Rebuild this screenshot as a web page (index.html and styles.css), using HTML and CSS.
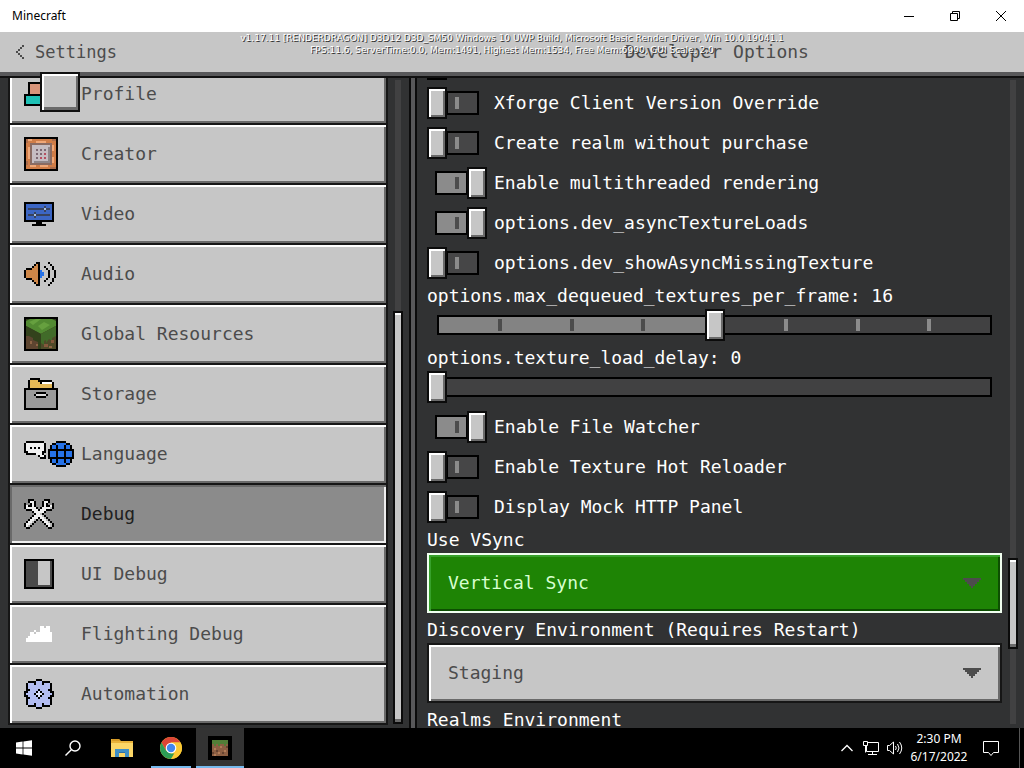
FILE: index.html
```html
<!DOCTYPE html>
<html lang="en">
<head>
<meta charset="utf-8">
<title>Minecraft</title>
<link rel="stylesheet" href="styles.css">
</head>
<body>
<div class="window-bar">
  <span class="window-title">Minecraft</span>
  <button class="window-button" aria-label="Minimize"><svg width="12" height="12"><path d="M1 6.5h10" stroke="#000" fill="none"/></svg></button>
  <button class="window-button" aria-label="Restore"><svg width="12" height="12"><path d="M1.5 3.5h7v7h-7zM3.5 3.5v-2h7v7h-2" stroke="#000" fill="none"/></svg></button>
  <button class="window-button" aria-label="Close"><svg width="12" height="12"><path d="M1 1l10 10M11 1L1 11" stroke="#000" fill="none"/></svg></button>
</div>

<div class="app">
  <header class="header">
    <button class="back"><svg width="10" height="14" viewBox="0 0 5 7" shape-rendering="crispEdges"><path d="M3 0h1v1H3zM2 1h1v1H2zM1 2h1v1H1zM0 3h1v1H0zM1 4h1v1H1zM2 5h1v1H2zM3 6h1v1H3z" fill="#4c4c4c"/></svg>Settings</button>
    <h1 class="page-title">Developer Options</h1>
  </header>
  <div class="debug-info">v1.17.11 [RENDERDRAGON] D3D12 D3D_SM50 Windows 10 UWP Build, Microsoft Basic Render Driver, Win 10.0.19041.1<br>FPS:11.6, ServerTime:0.0, Mem:1491, Highest Mem:1534, Free Mem:6990, GUI Scale: 2.0</div>
  <div class="blank-tile"></div>

  <main class="panels">
    <nav class="sidebar">
      <div class="menu">
        <button class="menu-item"><span class="icon"><svg width="34" height="24" viewBox="0 0 17 12" shape-rendering="crispEdges"><path d="M2 0h10v6H2z"/><path d="M3 1h8v5H3z" fill="#d8957a"/><path d="M0 6h14v6H0z"/><path d="M1 7h12v4H1z" fill="#1fc1b5"/></svg></span>Profile</button>
        <button class="menu-item"><span class="icon"><svg width="34" height="34" viewBox="0 0 17 17" shape-rendering="crispEdges"><path d="M0 0h17v17H0z"/><path d="M1 1h15v15H1z" fill="#cf7d48"/><path d="M2 1h2v1H2zM6 2h5v1H6zM2 5h1v6H2zM14 4h1v3h-1zM3 14h3v1H3zM8 14h4v1H8zM14 10h1v3h-1z" fill="#f0a878"/><path d="M1 1h1v2H1zM14 1h2v1h-2zM1 12h1v2H1zM13 15h3v1h-3z" fill="#a96c4c"/><path d="M3 3h11v11H3z" fill="#8a6b62"/><path d="M4 4h9v9H4z" fill="#c5bdc2"/><path d="M12 5h1v8H5v-1h7z" fill="#8f8689"/><path d="M6 6h1v1H6zM8 6h1v1H8zM10 6h1v1h-1zM6 8h1v1H6zM8 8h1v1H8zM6 10h1v1H6z" fill="#7d6974"/><path d="M10 8h1v1h-1zM8 10h1v1H8zM10 10h1v1h-1z" fill="#b64e61"/></svg></span>Creator</button>
        <button class="menu-item"><span class="icon" data-icon="video"></span>Video</button>
        <button class="menu-item"><span class="icon" data-icon="audio"></span>Audio</button>
        <button class="menu-item"><span class="icon"><svg width="34" height="34" viewBox="0 0 34 34"><path d="M0 0h34v34H0z"/><path d="M2 2h30v30H2z" fill="#2e3c1b"/><path d="M2 4L6 2h22l4 2v5L17 17 2 9z" fill="#528a32"/><path d="M5 5l7-3h5l-8 6zM14 9l6-4 6 3-8 5z" fill="#66a03f"/><path d="M2 9l15 8v15H2z" fill="#33421c"/><path d="M17 17l15-8v23H17z" fill="#4f4a29"/><path d="M17 17l15-8v10l-4 2v3l-3-2-3 4v-3l-2 1v4l-3-2z" fill="#416b29"/><path d="M5 19l4 2v2l5 2v7H2V19h3z" fill="#5d4530"/><path d="M20 27h4v3h-4zM27 23h3v3h-3z" fill="#85583c"/><path d="M6 24h2v3H6zM12 27h2v2h-2zM25 29h3v2h-3z" fill="#8e6545"/></svg></span>Global Resources</button>
        <button class="menu-item"><span class="icon"><svg width="34" height="32" viewBox="0 0 17 16" shape-rendering="crispEdges"><path d="M3 0h5v1h6v1h1v3H2V1h1z"/><path d="M3 1h4v1h1v1h6v2H3z" fill="#e5b957"/><path d="M9 2h5v1H9z" fill="#fff"/><path d="M0 5h17v11H0z"/><path d="M1 6h15v9H1z" fill="#9a9a9a"/><path d="M6 7h5v1H6zM5 8h1v1H5zM11 8h1v1h-1zM6 9h5v1H6z"/><path d="M6 8h5v1H6z" fill="#ddd"/></svg></span>Storage</button>
        <button class="menu-item"><span class="icon" data-icon="language"></span>Language</button>
        <button class="menu-item selected" aria-current="page"><span class="icon" data-icon="tools"></span>Debug</button>
        <button class="menu-item"><span class="icon"><svg width="30" height="30" viewBox="0 0 15 15" shape-rendering="crispEdges"><path d="M0 0h15v15H0z"/><path d="M1 1h13v13H1z" fill="#4a4a4a"/><path d="M7 1h6v12H7z" fill="#c6c6c6"/></svg></span>UI Debug</button>
        <button class="menu-item"><span class="icon" data-icon="cloud"></span>Flighting Debug</button>
        <button class="menu-item"><span class="icon" data-icon="gear"></span>Automation</button>
      </div>
      <div class="scroll sidebar-scroll"><div class="thumb"></div></div>
    </nav>

    <section class="content">
      <form class="options">
        <div class="clipped-toggle"></div>
        <label class="toggle-row"><input type="checkbox" class="toggle">Xforge Client Version Override</label>
        <label class="toggle-row"><input type="checkbox" class="toggle">Create realm without purchase</label>
        <label class="toggle-row"><input type="checkbox" class="toggle" checked>Enable multithreaded rendering</label>
        <label class="toggle-row"><input type="checkbox" class="toggle" checked>options.dev_asyncTextureLoads</label>
        <label class="toggle-row"><input type="checkbox" class="toggle">options.dev_showAsyncMissingTexture</label>
        <div class="field">
          <label class="field-label" for="max-textures">options.max_dequeued_textures_per_frame: 16</label>
          <div class="slider">
            <div class="track half"><i class="tick dark"></i><i class="tick dark"></i><i class="tick dark"></i><i class="tick"></i><i class="tick"></i><i class="tick"></i><i class="tick"></i></div>
            <input type="range" id="max-textures" min="0" max="32" value="16">
          </div>
        </div>
        <div class="field">
          <label class="field-label" for="load-delay">options.texture_load_delay: 0</label>
          <div class="slider">
            <div class="track"></div>
            <input type="range" id="load-delay" min="0" max="32" value="0">
          </div>
        </div>
        <label class="toggle-row"><input type="checkbox" class="toggle" checked>Enable File Watcher</label>
        <label class="toggle-row"><input type="checkbox" class="toggle">Enable Texture Hot Reloader</label>
        <label class="toggle-row"><input type="checkbox" class="toggle">Display Mock HTTP Panel</label>
        <div class="field">
          <label class="field-label" for="vsync">Use VSync</label>
          <div class="dropdown">
            <select id="vsync" class="active"><option>Vertical Sync</option></select>
            <svg class="arrow" width="18" height="10" viewBox="0 0 9 5" shape-rendering="crispEdges"><path d="M0 0h9v1H8v1H7v1H6v1H5v1H4V4H3V3H2V2H1V1H0z" fill="#4c4c4c"/></svg>
          </div>
        </div>
        <div class="field">
          <label class="field-label" for="discovery">Discovery Environment (Requires Restart)</label>
          <div class="dropdown">
            <select id="discovery"><option>Staging</option></select>
            <svg class="arrow" width="18" height="10" viewBox="0 0 9 5" shape-rendering="crispEdges"><path d="M0 0h9v1H8v1H7v1H6v1H5v1H4V4H3V3H2V2H1V1H0z" fill="#4c4c4c"/></svg>
          </div>
        </div>
        <div class="field-label">Realms Environment</div>
      </form>
      <div class="scroll content-scroll"><div class="thumb"></div></div>
    </section>
  </main>
</div>

<footer class="taskbar">
  <button class="task" aria-label="Start"><svg width="16" height="16"><path d="M0 2.4L6.6 1.5v6H0zM7.4 1.4L16 .2v7.3H7.4zM0 8.4h6.6v6L0 13.5zM7.4 8.4H16v7.4l-8.6-1.2z" fill="#fff"/></svg></button>
  <button class="task" aria-label="Search"><svg width="18" height="18"><circle cx="11" cy="7" r="5" fill="none" stroke="#fff" stroke-width="1.4"/><path d="M7.3 10.7L1.5 16.5" stroke="#fff" stroke-width="1.4"/></svg></button>
  <button class="task" aria-label="File Explorer"><svg width="22" height="19"><path d="M0 0h8l2 2h12v16H0z" fill="#e8b23a"/><path d="M0 4h22v14H0z" fill="#fbd667"/><path d="M1 0h7l1 2H1z" fill="#d79b27"/><path d="M4 10h14v8h-4v-4H8v4H4z" fill="#3f8fc6"/><path d="M8 13h6v1H8z" fill="#2d6fa5"/></svg></button>
  <button class="task running" aria-label="Chrome"><svg width="22" height="22" viewBox="0 0 22 22"><circle cx="11" cy="11" r="11" fill="#fbc934"/><path d="M1.5 5.5A11 11 0 0 1 20.5 5.5H11L6.2 13.8z" fill="#dc4536"/><path d="M1.5 5.5L6.2 13.8 11 16.5h4.7L11 22A11 11 0 0 1 1.5 5.5z" fill="#2c9d56"/><path d="M20.5 5.5A11 11 0 0 1 11 22l4.8-8.3L16 8 11 5.5z" fill="#fbc934"/><circle cx="11" cy="11" r="5.3" fill="#fff"/><circle cx="11" cy="11" r="4.2" fill="#4387ee"/></svg></button>
  <button class="task running current" aria-label="Minecraft"><svg width="24" height="24" viewBox="0 0 12 12" shape-rendering="crispEdges"><path d="M0 0h12v12H0z"/><path d="M2 2h8v8H2z" fill="#8c5f43"/><path d="M2 2h8v2H9v1H8V4H6v1H5V4H4v1H3V4H2z" fill="#527e37"/><path d="M3 6h1v1H3zM6 5h1v1H6zM8 7h1v1H8zM5 8h1v1H5zM3 9h1v1H3z" fill="#b17b57"/><path d="M4 7h1v1H4zM7 8h1v1H7zM2 8h1v1H2zM9 5h1v1H9z" fill="#654331"/></svg></button>
  <div class="tray">
    <button class="tray-button" aria-label="Show hidden icons"><svg width="14" height="8"><path d="M1.5 7L7 1.5 12.5 7" fill="none" stroke="#fff" stroke-width="1.3"/></svg></button>
    <button class="tray-button" aria-label="Network"><svg width="18" height="16"><path d="M6 2.5h10.500v9H4.500V6M1.500 1.500h4v4h-4zM3.500 5.500v7M10.500 11.500v2.500M6 14.500h9" fill="none" stroke="#fff"/></svg></button>
    <button class="tray-button" aria-label="Volume"><svg width="18" height="16"><path d="M1.500 5.500h2L7.500 2v12l-4-3.500h-2z" fill="none" stroke="#fff"/><path d="M9.500 6q1.500 2 0 4M11.500 4q3 4 0 8M13.500 2q4.500 6 0 12" fill="none" stroke="#fff"/></svg></button>
    <time class="clock">2:30 PM<br>6/17/2022</time>
    <button class="notify" aria-label="Notifications"><svg width="18" height="17"><path d="M1.500 1.500h15v11h-5L9 15.500 6.500 12.500h-5z" fill="none" stroke="#fff"/></svg></button>
  </div>
</footer>
<script src="icons.js"></script>
</body>
</html>
```

FILE: styles.css
```css
*, *::before, *::after { box-sizing: border-box; }
body {
  margin: 0;
  height: 100vh;
  display: flex;
  flex-direction: column;
  overflow: hidden;
  background: #313233;
  color: #fff;
  font: 18px/26px "DejaVu Sans Mono", monospace;
}
button, select { font: inherit; color: inherit; border: 0; border-radius: 0; margin: 0; padding: 0; background: none; }
svg { display: block; flex: none; }

.window-bar {
  flex: none;
  display: flex;
  align-items: center;
  height: 32px;
  padding-left: 12px;
  background: #fff;
  color: #000;
  font: 12px/16px "Noto Sans", sans-serif;
}
.window-title { flex: 1; }
.window-button { width: 46px; height: 32px; display: flex; align-items: center; justify-content: center; }

.app { position: relative; flex: 1; min-height: 0; display: flex; flex-direction: column; }
.header {
  flex: none;
  display: flex;
  align-items: center;
  height: 46px;
  background: #c6c6c6;
  border-bottom: 2px solid #111;
  box-shadow: inset 0 -4px #58585a;
  padding-bottom: 4px;
  color: #4c4c4c;
}
.back { width: 40%; padding-left: 16px; display: flex; align-items: center; gap: 9px; font-size: 17px; }
.page-title { flex: 1; margin: 0; font: inherit; text-align: center; }
.debug-info {
  position: absolute;
  top: 0;
  left: 0;
  right: 0;
  text-align: center;
  white-space: nowrap;
  font: 9px/12px "DejaVu Sans", sans-serif;
  color: #fff;
  text-shadow: 1px 1px #333;
}
.blank-tile {
  position: absolute;
  z-index: 1;
  left: 40px;
  top: 40px;
  width: 40px;
  height: 40px;
  background: #c6c6c6;
  border: 2px solid #111;
  box-shadow: inset 2px 2px #fff, inset -2px -3px #6a6a6a;
}

.panels { flex: 1; min-height: 0; display: flex; overflow: hidden; }
.sidebar { width: 411px; flex: none; display: flex; padding-left: 8px; border-right: 2px solid #0b0b0b; }
.menu {
  flex: 1;
  align-self: flex-start;
  margin-top: -13px;
  border: solid #161616;
  border-width: 0 2px;
}
.menu-item {
  width: 100%;
  height: 60px;
  display: flex;
  align-items: center;
  padding: 0 0 0 14px;
  border-bottom: 2px solid #161616;
  background: #c6c6c6;
  box-shadow: inset 2px 2px #fff, inset -2px -2px #6a6a6a;
  color: #4c4c4c;
  text-align: left;
}
.menu-item.selected {
  background: #8b8b8b;
  box-shadow: inset 2px 2px #6a6a6a, inset -2px -2px #eee;
  color: #202020;
}
.icon { flex: none; width: 57px; }

.scroll { flex: none; display: flex; flex-direction: column; width: 10px; background: linear-gradient(#414142, #414142) center / 6px 100% no-repeat; }
.thumb { background: #c6c6c6; border: 2px solid #0b0b0b; box-shadow: inset 0 2px #fff, inset 0 -3px #6a6a6a; }
.sidebar-scroll { margin: 2px 6px 4px 5px; }
.sidebar-scroll::before { content: ""; flex: 232; }
.sidebar-scroll .thumb { flex: 412; }
.content-scroll { margin: 2px 6px 4px; }
.content-scroll::before { content: ""; flex: 481; }
.content-scroll .thumb { flex: 88; }
.content-scroll::after { content: ""; flex: 75; }

.content { flex: 1; min-width: 0; display: flex; border-left: 4px solid #58585a; }
.options { flex: 1; min-width: 0; border-left: 2px solid #0b0b0b; padding-left: 10px; }
.clipped-toggle { height: 5px; width: 20px; background: linear-gradient(#000, #000) top / 100% 2px no-repeat; }
.toggle-row { display: flex; align-items: center; gap: 7px; height: 40px; white-space: nowrap; }
.toggle { appearance: none; flex: none; display: flex; align-items: center; width: 60px; height: 32px; margin: 0; }
.toggle::before {
  content: "";
  order: 2;
  width: 33px;
  height: 24px;
  margin-left: -1px;
  border: 2px solid #000;
  background: linear-gradient(#8b8b8b, #8b8b8b) 7px 4px / 4px 12px no-repeat #464647;
}
.toggle::after {
  content: "";
  order: 1;
  z-index: 1;
  width: 20px;
  height: 32px;
  border: 2px solid #0b0b0b;
  background: #c6c6c6;
  box-shadow: inset 2px 2px #fff, inset -2px -2px #6a6a6a;
}
.toggle:checked::before {
  order: 1;
  margin-left: 8px;
  background: linear-gradient(#4c4c4c, #4c4c4c) 18px 4px / 4px 12px no-repeat #8b8b8b;
}
.toggle:checked::after { order: 2; margin-left: -1px; }

.field { margin-bottom: 4px; }
.field-label { display: block; height: 26px; line-height: 26px; white-space: nowrap; }
.slider { display: grid; align-items: center; height: 32px; }
.slider > * { grid-area: 1 / 1; }
.track {
  height: 20px;
  margin: 0 10px;
  padding: 0 59px;
  border: 2px solid #000;
  background: #414142;
  display: flex;
  align-items: center;
  justify-content: space-between;
}
.track.half { background: linear-gradient(90deg, #838383 50%, #414142 50%); }
.tick { width: 4px; height: 12px; background: #8b8b8b; }
.tick.dark { background: #4c4c4c; }
.slider input { appearance: none; width: 100%; height: 32px; margin: 0; background: none; }
.slider input::-webkit-slider-thumb {
  appearance: none;
  box-sizing: border-box;
  width: 20px;
  height: 32px;
  border: 2px solid #0b0b0b;
  border-radius: 0;
  background: #c6c6c6;
  box-shadow: inset 2px 2px #fff, inset -2px -2px #6a6a6a;
}
.dropdown { display: grid; align-items: center; }
.dropdown > * { grid-area: 1 / 1; }
.dropdown select {
  appearance: none;
  width: 100%;
  height: 60px;
  padding: 0 48px 0 19px;
  border: 2px solid #161616;
  background: #c6c6c6;
  box-shadow: inset 2px 2px #fff, inset -2px -2px #6a6a6a;
  color: #4c4c4c;
}
.dropdown select.active {
  border-color: #f0fff0;
  background: #1e8405;
  box-shadow: inset 2px 2px #37a02b, inset -2px -2px #0d4f02;
  color: #d8ffd0;
}
.arrow { justify-self: end; margin-right: 21px; pointer-events: none; }

.taskbar { flex: none; display: flex; gap: 1px; height: 40px; background: #000; font: 12px/18px "Noto Sans", sans-serif; }
.task { width: 48px; height: 40px; display: flex; align-items: center; justify-content: center; }
.running { background: linear-gradient(#76b9ed, #76b9ed) bottom / 40px 2px no-repeat; }
.current { background: linear-gradient(#76b9ed, #76b9ed) bottom / 100% 2px no-repeat #333; }
.tray { margin-left: auto; display: flex; align-items: center; padding-right: 4px; }
.tray::after { content: ""; align-self: stretch; margin-left: 8px; border-left: 1px solid #555; }
.tray-button { width: 24px; height: 40px; display: flex; align-items: center; justify-content: center; }
.clock { width: 64px; text-align: center; }
.notify { width: 40px; height: 40px; display: flex; align-items: center; justify-content: center; }
```

FILE: icons.js
```js
// Pixel-art icons: each character is one 2px cell, coloured from the palette.
const palette = { b: "#000", o: "#cf8748", n: "#2672e8", u: "#3c66c4", g: "#39435c", k: "#a9c1e0", w: "#f1f1f1", s: "#b9b9b9", v: "#b3bdf2", p: "#dfe4ff", c: "#fff" };

const mirror = (top, middle) => [...top, ...middle, ...[...top].reverse()];

const bubble = [
  ".bbbbbbbbb.",
  "bwwwwwwwwwb",
  "bwwwwwwwwwb",
  "bwwbwbwbwwb",
  "bwwwwwwwwwb",
  "bbwwwwwwwbb",
  ".bbbbbwwwb.",
  ".......bwwb",
  "........bbb"
];
const globe = mirror(
  ["....bbbbb....", "..bbnnnnnbb..", ".bnnbnnnbnnb.", ".bnnbnnnbnnb.", "bbbbbbbbbbbbb"],
  ["bnnnbnnnbnnnb", "bnnnbnnnbnnnb", "bnnnbnnnbnnnb"]
);

const icons = {
  video: [
    "bbbbbbbbbbbbbbb",
    "buuuuuuuuuuuuub",
    "buuuuuuuuuguuub",
    "buggggggggkggub",
    "buuuuuuuuuguuub",
    "buuuuguuuuuuuub",
    "bugggkgggggggub",
    "buuuuguuuuuuuub",
    "buuuuuuuuuuuuub",
    "bbbbbbbbbbbbbbb",
    "......bbb......",
    "....bbbbbbb...."
  ],
  audio: mirror([
    "......bb....b...",
    ".....bob.....b..",
    "....boob..b...b.",
    ".bbbooob...b..b.",
    "boooooobn...b..b",
    "boooooobnn..b..b"
  ], []),
  language: globe.map((row, i) => (bubble[i] || "...........") + "." + row),
  tools: [
    "..bbb.....bbb..",
    "..bwwb...bwwb..",
    "b..bwb...bwb..b",
    "bwbbwb...bwbbwb",
    "bwwwwwb.bwwwwsb",
    ".bbbwwwbwwwbbb.",
    "....bwwwwwb....",
    ".....bwwsb.....",
    "....bwwwwsb....",
    "...bwwwbwwsb...",
    "..bwwsb.bwwsb..",
    ".bwwsb...bwwsb.",
    "bwwsb.....bwwsb",
    "bwsb.......bwsb",
    ".bb.........bb."
  ],
  cloud: [
    "........cc.cc.",
    "........ccccc.",
    ".....c..ccccc.",
    "...cc.cccccccc",
    "...ccccccccccc",
    "..cccccccccccc",
    ".ccccccccccccc",
    ".ccccccccccccc"
  ],
  gear: mirror([
    "......bbb......",
    "..bbbbvvvbbbb..",
    ".bvvvbvvvbvvvb.",
    ".bvvvvvvvvvvvb.",
    ".bvvvvvvvvvvvb.",
    ".bbvvvvbvvvvbb.",
    "bbvvvvbpbvvvvbb"
  ], ["bvvvvbpppbvvvvb"])
};

document.querySelectorAll("[data-icon]").forEach((slot) => {
  const rows = icons[slot.dataset.icon];
  const width = rows[0].length;
  const cells = rows.map((row, y) => [...row].map((c, x) =>
    c === "." ? "" : `<rect x="${x}" y="${y}" width="1" height="1" fill="${palette[c]}"/>`).join("")).join("");
  slot.innerHTML = `<svg width="${width * 2}" height="${rows.length * 2}" viewBox="0 0 ${width} ${rows.length}" shape-rendering="crispEdges">${cells}</svg>`;
});
```
